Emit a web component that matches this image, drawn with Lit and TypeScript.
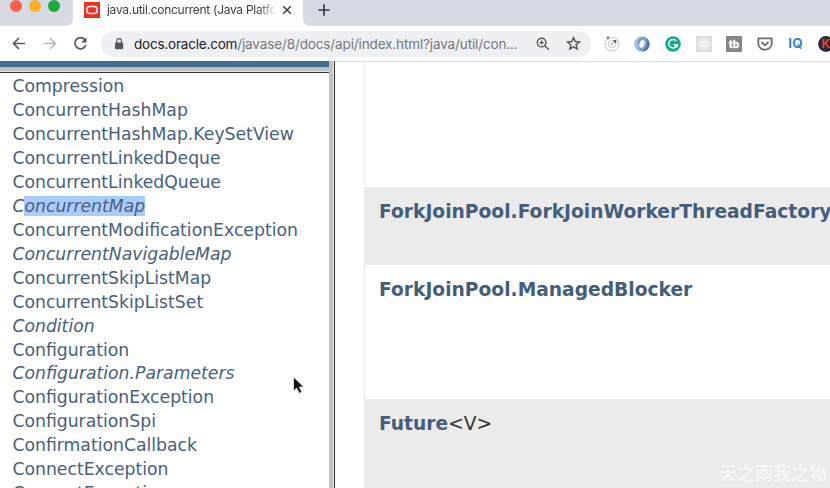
import { LitElement, html, css } from "lit";
import { customElement } from "lit/decorators.js";

const before = [
  "Compression", "ConcurrentHashMap", "ConcurrentHashMap.KeySetView",
  "ConcurrentLinkedDeque", "ConcurrentLinkedQueue",
];
const after: [string, boolean][] = [
  ["ConcurrentModificationException", false],
  ["ConcurrentNavigableMap", true],
  ["ConcurrentSkipListMap", false],
  ["ConcurrentSkipListSet", false],
  ["Condition", true],
  ["Configuration", false],
  ["Configuration.Parameters", true],
  ["ConfigurationException", false],
  ["ConfigurationSpi", false],
  ["ConfirmationCallback", false],
  ["ConnectException", false],
  ["ConnectException", false],
];

@customElement("browser-chrome")
class BrowserChrome extends LitElement {
  static styles = css`
    :host { display: block; height: 62px; font-family: Inter, "Liberation Sans", sans-serif; background: #fff; }
    .tabs { display: flex; height: 26px; background: #fdfdfe; }
    .lights { box-sizing: border-box; width: 73px; background: #d5dae3; border-bottom-right-radius: 7px; display: flex; gap: 7px; padding-left: 10px; }
    .light { width: 12px; height: 12px; border-radius: 50%; }
    .red { background: #ff5f51; } .amber { background: #fbb024; } .green { background: #1aab3a; }
    .tab { width: 229.5px; box-sizing: border-box; padding-left: 11px; display: flex; height: 20px; align-items: center; }
    .favicon { width: 16px; height: 16px; flex: none; }
    .title { margin-left: 7px; width: 168px; overflow: hidden; white-space: nowrap; font-size: 12px; line-height: 20px; letter-spacing: -.29px; color: #3d4043;
      -webkit-mask-image: linear-gradient(90deg, #000 90%, transparent 101%); mask-image: linear-gradient(90deg, #000 90%, transparent 101%); }
    .close { margin-left: 6px; width: 12px; height: 12px; flex: none; }
    .rest { flex: 1; background: #d5dae3; border-bottom-left-radius: 7px; padding: 3px 0 0 14px; }
    .rest svg { width: 14px; height: 14px; display: block; }
    .bar { display: flex; align-items: center; border-bottom: 1px solid #dcdddf; box-sizing: border-box; height: 36px; }
    .nav { display: flex; width: 101px; box-sizing: border-box; padding-left: 11px; gap: 15px; flex: none; }
    .nav svg { width: 16px; height: 16px; }
    .omni { width: 490px; height: 26px; border-radius: 13px; background: #eff0f4; display: flex; align-items: center; flex: none; box-sizing: border-box; padding-left: 12px; }
    .lock { width: 12px; height: 14px; }
    .url { margin-left: 9px; width: 402px; font-size: 13.500px; letter-spacing: -.13px; white-space: nowrap; color: #74777c; }
    .host { color: #202226; letter-spacing: -.2px; }
    .zoomed { width: 14px; height: 14px; flex: none; }
    .star { width: 15px; height: 15px; margin-left: 16px; flex: none; }
    .ext { display: flex; gap: 14.700px; padding-left: 12.500px; flex: none; }
    .ext svg { width: 16px; height: 16px; flex: none; }
    .glyph { font-family: Inter, "Liberation Sans", sans-serif; font-weight: 700; }
  `;
  render() {
    return html`
      <div class="tabs">
        <div class="lights"><i class="light red"></i><i class="light amber"></i><i class="light green"></i></div>
        <div class="tab">
          <svg class="favicon" viewBox="0 0 16 16"><rect width="16" height="16" fill="#f52c22"/><rect x="2.8" y="4.4" width="10.4" height="7.2" rx="3" fill="none" stroke="#fff" stroke-width="1.5"/></svg>
          <span class="title">java.util.concurrent (Java Platfo</span>
          <svg class="close" viewBox="0 0 12 12" stroke="#46494d" stroke-width="1.6"><path d="M2.2 2.2l7.6 7.6M9.800 2.200l-7.600 7.600"/></svg>
        </div>
        <div class="rest"><svg viewBox="0 0 14 14" stroke="#36393d" stroke-width="1.7"><path d="M7 1.300v11.400M1.300 7h11.400"/></svg></div>
      </div>
      <div class="bar">
        <div class="nav">
          <svg viewBox="0 0 16 16" fill="none" stroke="#55585c" stroke-width="1.6"><path d="M14.200 7.500H2.500M8 2L2.500 7.500 8 13"/></svg>
          <svg viewBox="0 0 16 16" fill="none" stroke="#b3b5b8" stroke-width="1.5"><path d="M1.800 7.500h11.700M8 2L13.500 7.500 8 13"/></svg>
          <svg viewBox="0 0 16 16" fill="none" stroke="#55585c" stroke-width="1.7"><path d="M11.800 3.600A5.600 5.600 0 1 0 12.800 9"/><path d="M13.500 1.200V6.500H8.200z" fill="#55585c" stroke="none"/></svg>
        </div>
        <div class="omni">
          <svg class="lock" viewBox="0 0 12 14"><rect x="2" y="5.500" width="8.200" height="6.700" rx="1" fill="#55585c"/><path d="M3.800 6V4a2.300 2.300 0 0 1 4.600 0v2" fill="none" stroke="#55585c" stroke-width="1.200"/></svg>
          <span class="url"><span class="host">docs.oracle.com</span>/javase/8/docs/api/index.html?java/util/con...</span>
          <svg class="zoomed" viewBox="0 0 14 14" fill="none" stroke="#55585c" stroke-width="1.400"><circle cx="5.600" cy="5.600" r="4.300"/><path d="M8.800 8.800l4 4M3.600 5.600h4M5.600 3.600v4"/></svg>
          <svg class="star" viewBox="0 0 15 15" fill="none" stroke="#55585c" stroke-width="1.500"><path d="M7.500 1.600l1.700 4 4.300.4-3.300 2.800 1 4.200-3.700-2.200L3.800 13l1-4.200L1.500 6l4.300-.4z"/></svg>
        </div>
        <div class="ext">
          <svg viewBox="0 0 16 16" fill="none" stroke="#c8c8c8"><circle cx="8" cy="8" r="6.900"/><circle cx="8" cy="8" r="3.800"/><circle cx="8" cy="8" r="1.700" fill="#ccc" stroke="none"/><circle cx="4" cy="1.900" r="1.400" fill="#777" stroke="none"/><circle cx="11" cy="5.200" r="1.500" fill="#555" stroke="none"/></svg>
          <svg viewBox="0 0 16 16"><circle cx="8" cy="8" r="7.600" fill="#7fa3cf"/><path d="M8 .4C2.500 1.500 2 9 6.200 14.200 3 13.500.4 11.500.4 8A7.600 7.600 0 0 1 8 .4z" fill="#a9c1df"/><path d="M10.500 1.500c4 3 3.500 9-2.500 14 5 0 7.600-3.500 7.600-7.500 0-3-2-5.500-5.100-6.500z" fill="#4a76b5"/><ellipse cx="8" cy="8" rx="2.500" ry="4" fill="#f6f8fb" transform="rotate(18 8 8)"/></svg>
          <svg viewBox="0 0 16 16"><circle cx="8" cy="8" r="7.800" fill="#15ae8c"/><path d="M11.300 5A4.200 4.200 0 1 0 12.100 8.800H8.800M12.200 8.700v2.500" fill="none" stroke="#fff" stroke-width="1.500"/></svg>
          <svg viewBox="0 0 16 16"><rect width="16" height="16" rx="1" fill="#dedede"/><g fill="none" stroke="#fff" stroke-width=".8"><ellipse cx="8" cy="8" rx="6.500" ry="2.500"/><ellipse cx="8" cy="8" rx="6.500" ry="2.500" transform="rotate(60 8 8)"/><ellipse cx="8" cy="8" rx="6.500" ry="2.500" transform="rotate(120 8 8)"/></g><circle cx="8" cy="8" r="1.300" fill="#fff"/></svg>
          <svg viewBox="0 0 16 16"><rect width="16" height="16" fill="#858585"/><text class="glyph" x="8" y="11.500" font-size="10" text-anchor="middle" fill="#fff" stroke="#fff" stroke-width=".4">tb</text></svg>
          <svg viewBox="0 0 16 16" fill="none" stroke="#6c6c6c"><path d="M1.300 2.400h13.400v5a6.700 6.300 0 0 1-13.400 0z" stroke-width="1.800" stroke-linejoin="round"/><path d="M4.500 6L8 9.300 11.500 6" stroke-width="1.800"/></svg>
          <svg viewBox="0 0 16 16"><text class="glyph" x="7.500" y="12" font-size="13.500" text-anchor="middle" fill="#3983cf">IQ</text></svg>
          <svg viewBox="0 0 16 16"><circle cx="8" cy="8" r="7.900" fill="#292c39"/><text class="glyph" x="7.700" y="12" font-size="11.500" text-anchor="middle" fill="#e04438">K</text></svg>
        </div>
      </div>`;
  }
}

@customElement("app-root")
class AppRoot extends LitElement {
  static styles = css`
    :host { display: block; position: relative; width: 830px; height: 488px; overflow: hidden; background: #fff; font-family: "DejaVu Sans", sans-serif; }
    .frames { display: flex; height: 426px; }
    .left { width: 329px; flex: none; overflow: hidden; margin-top: -1px; }
    .banner { height: 6px; background: #426e94; border-bottom: 1px solid #a9b9c7; }
    .edge { height: 3px; background: #c3c3c3; border-bottom: 1px solid #e4e4e4; }
    .rule { height: 1px; background: #353535; }
    .list { list-style: none; margin: 0; padding: 2.200px 0 0 12.400px; color: #48607c; font-size: 17.240px; line-height: 23.940px; white-space: nowrap; }
    .list li { height: 23.940px; }
    .it { font-style: italic; }
    .sel { background: #aaccfb; display: inline-block; height: 20px; line-height: 20px; vertical-align: baseline; }
    .divider { width: 4px; flex: none; margin-top: -1px; background: #c3c3c3; border-right: 1px solid #ececec; }
    .line { width: 1px; flex: none; background: #2e2e2e; margin-top: -1px; }
    .right { margin-left: 29px; border-left: 1px solid #ebebeb; flex: 1; min-width: 0; overflow: hidden; }
    .row { box-sizing: border-box; padding: 14px 0 0 14px; font-size: 18.670px; line-height: 22px; white-space: nowrap; color: #333; }
    .row b { color: #435e7d; }
    .r0 { height: 125px; } .r1 { height: 78px; } .r2 { height: 134.400px; } .r3 { height: 89px; }
    .alt { background: #ebebeb; }
    .cursor { position: absolute; left: 292px; top: 375px; width: 14px; height: 20px; }
    .mark { position: absolute; left: 719px; top: 460px; font: 500 18px/24px "Noto Sans CJK SC", sans-serif; color: #f8f8f8; white-space: nowrap; }
  `;
  render() {
    return html`
      <browser-chrome></browser-chrome>
      <div class="frames">
        <div class="left">
          <div class="banner"></div><div class="edge"></div><div class="rule"></div>
          <ul class="list">
            ${before.map((n) => html`<li>${n}</li>`)}
            <li class="it">C<span class="sel">oncurrentMap</span></li>
            ${after.map(([n, i]) => html`<li class=${i ? "it" : ""}>${n}</li>`)}
          </ul>
        </div>
        <div class="divider"></div><div class="line"></div>
        <div class="right">
          <div class="row r0"></div>
          <div class="row r1 alt"><b>ForkJoinPool.ForkJoinWorkerThreadFactory</b></div>
          <div class="row r2"><b>ForkJoinPool.ManagedBlocker</b></div>
          <div class="row r3 alt"><b>Future</b>&lt;V&gt;</div>
        </div>
      </div>
      <svg class="cursor" viewBox="0 0 14 20"><path d="M1.500 2v14l3.200-3 2.400 5.300 2.800-1.200-2.400-5.100h4.300z" fill="#111" stroke="#ddd"/></svg>
      <div class="mark">天之雨我之物</div>`;
  }
}
